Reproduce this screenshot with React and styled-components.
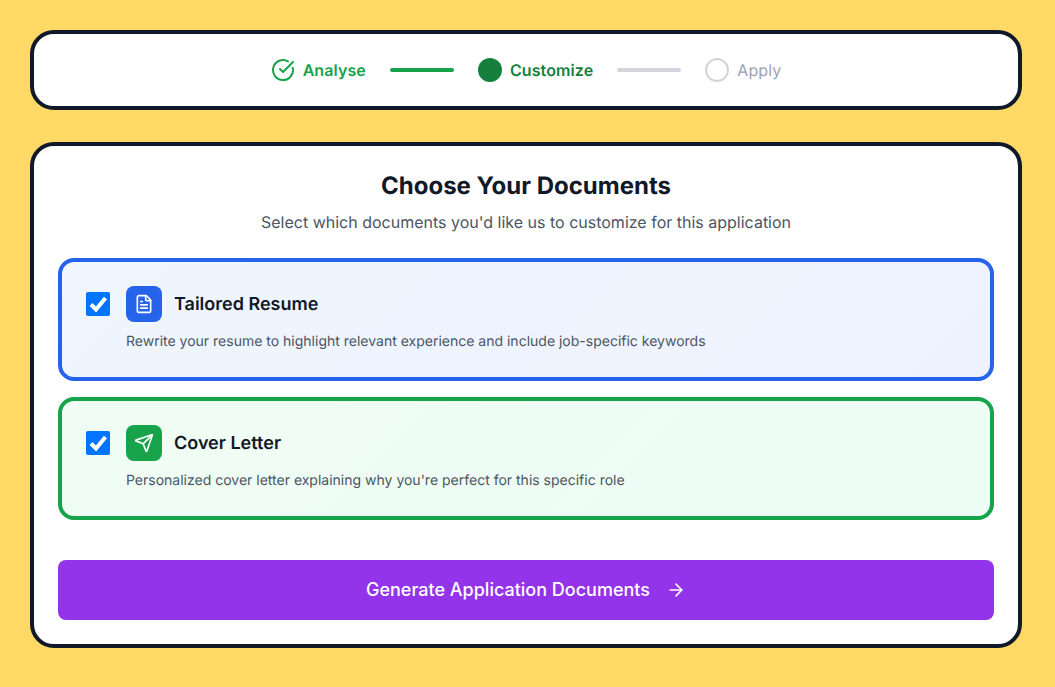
import React from "react";
import styled, { createGlobalStyle } from "styled-components";
import { FileText, Send, ArrowRight, CircleCheckBig } from "lucide-react";

const Global = createGlobalStyle`
  html, body { margin: 0; padding: 0; }
  body {
    background: #ffd966; font-family: Inter, "Liberation Sans", sans-serif;
    text-rendering: geometricPrecision; -webkit-font-smoothing: antialiased;
  }
  * { box-sizing: border-box; }
`;
const Page = styled.div`
  width: 1055px; height: 687px; padding: 30px 33px 39px 30px;
  display: flex; flex-direction: column; gap: 32px; background: #ffd966; overflow: hidden;
`;
const Panel = styled.div`
  background: #fff; border: 4px solid #111827; border-radius: 24px;
`;
const StepBar = styled(Panel)`
  height: 80px; display: flex; align-items: center; justify-content: center; gap: 24px;
`;
const Step = styled.div`
  display: flex; align-items: center; gap: 8px; font-size: 16px; line-height: 24px; letter-spacing: 0.1px;
  font-weight: ${p => p.$weight || 600}; color: ${p => p.$color};
`;
const Dot = styled.span`
  width: 24px; height: 24px; border-radius: 50%; display: block;
  background: ${p => p.$fill || "transparent"};
  border: ${p => p.$fill ? "none" : "2px solid #d1d5db"};
`;
const Line = styled.span`
  width: 64px; height: 4px; border-radius: 2px; background: ${p => p.$color};
`;
const Main = styled(Panel)`
  height: 506px; padding: 24px; display: flex; flex-direction: column;
`;
const Title = styled.h2`
  margin: 0; text-align: center; font-size: 24px; line-height: 32px; font-weight: 700; color: #111827;
`;
const Sub = styled.p`
  margin: 8px 0 24px; text-align: center; font-size: 16px; line-height: 24px; color: #4b5563;
`;
const Cards = styled.div`
  display: flex; flex-direction: column; gap: 16px;
`;
const Card = styled.div`
  height: 123px; border: 4px solid ${p => p.$border}; border-radius: 16px; background: ${p => p.$bg};
  padding: 24px; display: flex; gap: 16px;
`;
const Check = styled.input`
  appearance: none; width: 24px; height: 24px; margin: 6px 0 0; flex: none;
  border-radius: 2px; background-color: #0075ff; background-size: 24px 24px;
  background-image: url("data:image/svg+xml,%3Csvg xmlns='http://www.w3.org/2000/svg' width='24' height='24' viewBox='0 0 24 24'%3E%3Cpath d='M5 12.5l5 5L19.5 6' fill='none' stroke='white' stroke-width='4'/%3E%3C/svg%3E");
`;
const Body = styled.div`
  display: flex; flex-direction: column; gap: 10px;
`;
const Head = styled.div`
  display: flex; align-items: center; gap: 12px;
`;
const IconBox = styled.div`
  width: 36px; height: 36px; border-radius: 8px; background: ${p => p.$bg}; color: #fff;
  display: flex; align-items: center; justify-content: center;
`;
const CardTitle = styled.h3`
  margin: 0; padding-top: 2px; font-size: 18px; line-height: 28px; font-weight: 600; color: #111827;
`;
const Desc = styled.p`
  margin: 0; font-size: 14px; line-height: 20px; color: #4b5563;
`;
const Button = styled.button`
  margin-top: 40px; height: 60px; border: none; border-radius: 8px; background: #9333ea; color: #fff;
  font: 500 18px/28px Inter, "Liberation Sans", sans-serif; display: flex; align-items: center; justify-content: center; gap: 16px;
`;

export default function App() {
  return (
    <Page>
      <Global />
      <StepBar>
        <Step $color="#16a34a"><CircleCheckBig size={24} />Analyse</Step>
        <Line $color="#16a34a" />
        <Step $color="#15803d"><Dot $fill="#15803d" />Customize</Step>
        <Line $color="#d1d5db" />
        <Step $color="#9ca3af" $weight={400}><Dot />Apply</Step>
      </StepBar>
      <Main>
        <Title>Choose Your Documents</Title>
        <Sub>Select which documents you'd like us to customize for this application</Sub>
        <Cards>
          <Card $border="#2563eb" $bg="linear-gradient(135deg,#eff6ff,#eef2ff)">
            <Check type="checkbox" defaultChecked />
            <Body>
              <Head><IconBox $bg="#2563eb"><FileText size={20} /></IconBox><CardTitle>Tailored Resume</CardTitle></Head>
              <Desc>Rewrite your resume to highlight relevant experience and include job-specific keywords</Desc>
            </Body>
          </Card>
          <Card $border="#16a34a" $bg="linear-gradient(135deg,#f0fdf4,#ecfdf5)">
            <Check type="checkbox" defaultChecked />
            <Body>
              <Head><IconBox $bg="#16a34a"><Send size={20} /></IconBox><CardTitle>Cover Letter</CardTitle></Head>
              <Desc>Personalized cover letter explaining why you're perfect for this specific role</Desc>
            </Body>
          </Card>
        </Cards>
        <Button>Generate Application Documents<ArrowRight size={20} /></Button>
      </Main>
    </Page>
  );
}
